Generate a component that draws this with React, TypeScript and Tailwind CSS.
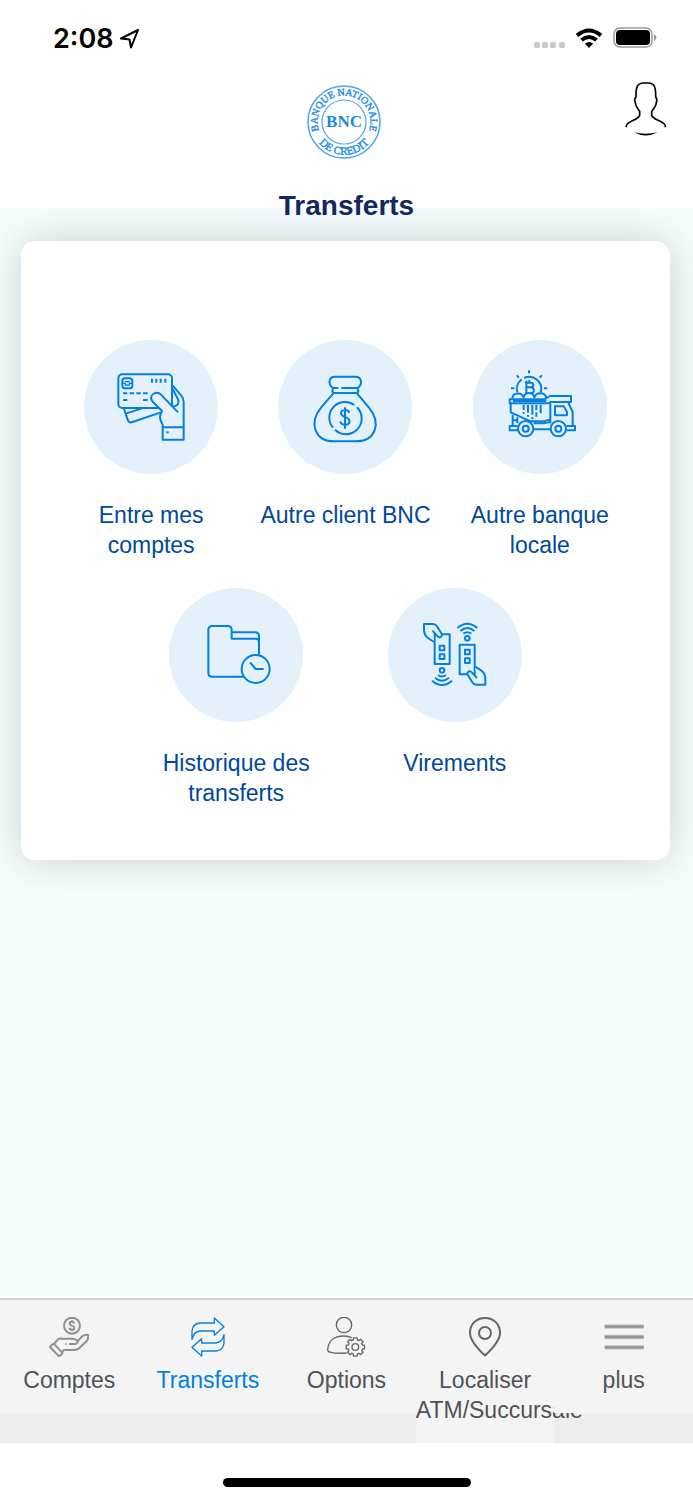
import type { ReactNode } from "react";

type Action = { label: string; icon: ReactNode };
type Tab = { label: string; icon: ReactNode; active?: boolean };

function ActionIcon({ viewBox, children }: { viewBox: string; children: ReactNode }) {
  return (
    <svg viewBox={viewBox} className="size-full" fill="none" stroke="#0080e0" strokeWidth="6" strokeLinejoin="round" aria-hidden="true">
      {children}
    </svg>
  );
}

function TabIcon({ viewBox, children }: { viewBox: string; children: ReactNode }) {
  return (
    <svg viewBox={viewBox} className="size-10" fill="none" stroke="#666" strokeWidth="4" strokeLinejoin="round" aria-hidden="true">
      {children}
    </svg>
  );
}

// Outline of a cog with eight square teeth
function gearPath(cx: number, cy: number, inner: number, outer: number) {
  const points: string[] = [];
  for (let i = 0; i < 8; i++) {
    const mid = (i * Math.PI) / 4;
    for (const [r, offset] of [[inner, -0.27], [outer, -0.2], [outer, 0.2], [inner, 0.27]]) {
      points.push(`${(cx + r * Math.cos(mid + offset)).toFixed(1)} ${(cy + r * Math.sin(mid + offset)).toFixed(1)}`);
    }
  }
  return `M${points.join("L")}Z`;
}

const TOP_ACTIONS: Action[] = [
  {
    label: "Entre mes comptes",
    icon: (
      <ActionIcon viewBox="-46 -45 402 402">
        <path d="M74 162L85 194Q89 205 100 201L184 172M79 176L128 160" />
        <path d="M220 92L246 122Q253 130 253 142V217M220 102L236 133Q240 146 232 151Q226 156 216 154" />
        <rect x="57" y="58" width="161" height="101" rx="12" />
        <rect x="69" y="70" width="30" height="30" rx="8" />
        <path d="M69 85H80M88 85H99M76 80H92M76 90H92" strokeWidth="4" />
        <path d="M158 71V83M171 71V83M184 71V83M198 71V83M71 115H84M91 115H104M111 115H124M131 115H145M71 135H84M131 135H145" />
        <path d="M190 217V209C178 190 181 180 188 168L160 140C152 131 155 121 162 117C170 112 179 113 185 119L236 172" fill="#e4f1fb" />
        <rect x="190" y="217" width="63" height="37" />
        <path d="M201 232H208" />
      </ActionIcon>
    ),
  },
  {
    label: "Autre client BNC",
    icon: (
      <ActionIcon viewBox="-63 -60 402 402">
        <path d="M103 84C88 76 86 50 108 50H169C191 50 190 76 175 84M103 84H118M127 84H175M103 84Q97 92 103 99H175Q181 92 175 84" />
        <path d="M103 100L66 143C28 190 48 244 105 244H170C230 244 248 190 210 143L174 100" />
        <path d="M166 135A47 47 0 0 0 102 203M108 209A47 47 0 0 0 174 142" />
        <path d="M151 158C148 148 126 147 126 160C126 173 152 170 152 184C152 198 126 197 124 184M138 142V206" />
      </ActionIcon>
    ),
  },
  {
    label: "Autre banque locale",
    icon: (
      <ActionIcon viewBox="-66 -60 402 402">
        <path d="M67 97A36 36 0 0 1 80 58M87 54A36 36 0 0 1 137 97M102 31V40M65 46L72 53M141 46L134 53M48 85H58M147 85H157" />
        <path d="M90 68H106C118 68 118 82 106 82H94M106 82C120 82 120 99 108 99M94 62V100M103 60V68" />
        <path d="M52 115C54 96 80 96 86 112C90 95 114 95 118 112C124 95 152 96 154 115" />
        <path d="M150 117L165 108H228V126H168L160 130H44V118H150ZM54 123H154" />
        <path d="M47 130V157L107 184H146L165 178M166 130V190M219 126L233 156V200M180 139H206L216 156V166H180Z" />
        <path d="M53 164V198M67 172V190M53 181H67M68 198H44V211H68M116 208H166M116 190H145L165 186M214 211H240V198H214" />
        <circle cx="92" cy="206" r="23" />
        <circle cx="92" cy="206" r="9" />
        <circle cx="190" cy="206" r="23" />
        <circle cx="190" cy="206" r="9" />
        <path d="M86 134V150M99 134V158M112 134V164M124 134V150M137 134V160M86 157V162M99 165V170M112 172V178M124 157V170" />
      </ActionIcon>
    ),
  },
];

const BOTTOM_ACTIONS: Action[] = [
  {
    label: "Historique des transferts",
    icon: (
      <ActionIcon viewBox="-60 -66 402 402">
        <path d="M165 200H70Q58 200 58 188V60Q58 48 70 48H116Q128 48 128 60V86H200Q210 86 210 96V134M128 67H198Q210 67 210 79V96" />
        <circle cx="200" cy="177" r="42" />
        <path d="M183 157L200 177H224" />
      </ActionIcon>
    ),
  },
  {
    label: "Virements",
    icon: (
      <ActionIcon viewBox="-51 -66 402 402">
        {[0, 180].map((angle) => (
          <g key={angle} transform={`rotate(${angle} 149 133)`}>
            <rect x="89" y="73" width="45" height="89" />
            <rect x="104" y="107" width="14" height="14" />
            <rect x="104" y="133" width="14" height="14" />
            <path d="M88 96L73 87Q57 77 57 60V42H84Q92 42 96 49L109 70C114 79 105 86 98 79L82 62" fill="#e4f1fb" />
            <circle cx="111" cy="181" r="7" />
            <path d="M99 195Q111 204 123 195M90 203Q111 221 132 203M81 212Q111 238 141 212" />
          </g>
        ))}
      </ActionIcon>
    ),
  },
];

const TABS: Tab[] = [
  {
    label: "Comptes",
    icon: (
      <TabIcon viewBox="149 81 120 120">
        <g stroke="#909090" strokeWidth="6">
          <circle cx="218" cy="107" r="24" />
          <path d="M225 100C222 93 211 94 211 101C211 108 225 106 225 113C225 121 212 121 210 113M218 91V97M218 118V123" />
          <path d="M164 162L175 149Q180 145 188 146H216Q231 147 235 153L250 138Q258 132 266 135Q268 143 263 152L240 174Q234 180 224 180H193L188 188" />
          <path d="M163 161L188 187Q190 191 186 194L179 199L152 171Q156 164 163 161ZM209 162H229Q236 159 235 153M198 162H202" />
        </g>
      </TabIcon>
    ),
  },
  {
    label: "Transferts",
    active: true,
    icon: (
      <TabIcon viewBox="562 82 120 120">
        {[0, 180].map((angle) => (
          <path key={angle} transform={`rotate(${angle} 622 142)`} d="M574 149V124Q576 102 598 100H641V85L670 111L641 137V124H598Q579 126 574 149Z" stroke="#0080e0" />
        ))}
      </TabIcon>
    ),
  },
  {
    label: "Options",
    icon: (
      <TabIcon viewBox="978 82 120 120">
        <circle cx="1032" cy="106" r="23" />
        <path d="M1040 190Q1010 192 993 188Q983 187 983 180C985 152 1005 139 1032 139Q1045 139 1055 144" />
        <path d={gearPath(1066, 172, 22, 28)} />
        <circle cx="1066" cy="172" r="10" />
      </TabIcon>
    ),
  },
  {
    label: "Localiser ATM/Succursale",
    icon: (
      <TabIcon viewBox="366 82 120 120">
        <g strokeWidth="6">
          <path d="M426 198C414 186 381 157 381 130C381 103 400 85 426 85S471 103 471 130C471 157 438 186 426 198Z" />
          <circle cx="426" cy="130" r="18" />
        </g>
      </TabIcon>
    ),
  },
  {
    label: "plus",
    icon: (
      <TabIcon viewBox="781 82 120 120">
        <path d="M783 111H900M783 142H900M783 173H900" stroke="#bdbdbd" strokeWidth="13" />
        <path d="M783 111H900M783 142H900M783 173H900" stroke="#929292" strokeWidth="7" />
      </TabIcon>
    ),
  },
];

function StatusBar() {
  return (
    <div className="flex h-[76px] items-center justify-between pr-9 pl-[53px]">
      <div className="flex items-center gap-1.5 pt-0.5">
        <span className="font-['Inter',sans-serif] text-[27px] leading-8 font-semibold text-black">2:08</span>
        <svg viewBox="0 0 20 20" className="size-5" fill="none" stroke="#000" strokeWidth="2" strokeLinejoin="round" aria-hidden="true">
          <path d="M18 1L1 9.500L9.500 10.500L11 18.500Z" />
        </svg>
      </div>
      <div className="flex items-center gap-2.5">
        <svg viewBox="0 0 32 22" className="h-[22px] w-8" fill="#c8c8c8" aria-hidden="true">
          <rect x="1" y="15" width="6" height="6" rx="2" />
          <rect x="9" y="15" width="6" height="6" rx="2" />
          <rect x="17" y="15" width="6" height="6" rx="2" />
          <rect x="26" y="15" width="6" height="6" rx="2" />
        </svg>
        <svg viewBox="0 0 28 20" className="h-5 w-7" fill="none" stroke="#000" strokeWidth="4" aria-hidden="true">
          <path d="M2 7.500Q14 -2.500 26 7.500M6.500 12Q14 6 21.500 12" />
          <path d="M14 20L9.800 15.500Q14 12.500 18.200 15.500Z" fill="#000" stroke="none" />
        </svg>
        <svg viewBox="0 0 44 22" className="h-[22px] w-11" aria-hidden="true">
          <rect x="1" y="1" width="38" height="19" rx="6" fill="none" stroke="#999" strokeWidth="1.500" />
          <rect x="3" y="3" width="34" height="15" rx="4" />
          <path d="M41 7Q46 10.500 41 14Z" fill="#999" />
        </svg>
      </div>
    </div>
  );
}

function Logo() {
  return (
    <svg viewBox="0 0 80 74" className="h-[74px] w-20" role="img" aria-label="Banque Nationale de Crédit">
      <defs>
        <path id="logo-top" d="M12.700 47.500A26.500 26.500 0 1 1 61.300 47.500" />
        <path id="logo-bottom" d="M9.700 55.200A32.800 32.800 0 0 0 64.300 55.200" />
      </defs>
      <g fill="none" stroke="#4aa5ea">
        <circle cx="37" cy="37" r="36" strokeWidth="1.500" />
        <circle cx="37" cy="37" r="22" strokeWidth="1.200" />
      </g>
      <g fill="#1c8ae2" textAnchor="middle" className="font-['Liberation_Serif',serif]">
        <text x="37" y="42" fontSize="17" fontWeight="700">BNC</text>
        <g stroke="#1c8ae2" strokeWidth="0.400">
          <text fontSize="10">
            <textPath href="#logo-top" startOffset="50%">BANQUE NATIONALE</textPath>
          </text>
          <text fontSize="11">
            <textPath href="#logo-bottom" startOffset="50%">DE CREDIT</textPath>
          </text>
        </g>
      </g>
    </svg>
  );
}

function Header() {
  return (
    <header className="relative z-10 bg-white">
      <StatusBar />
      <div className="grid grid-cols-[1fr_auto_1fr] items-start px-[26px] pt-1.5">
        <div />
        <div className="pt-[3px]">
          <Logo />
        </div>
        <button type="button" aria-label="Profil" className="justify-self-end">
          <svg viewBox="46 36 126 168" className="h-14 w-[42px]" fill="none" stroke="#000" strokeWidth="5" aria-hidden="true">
            <path d="M50 172V167C53 152 84 151 90 136V124C82 113 77 108 77 97Q72 89 79 80C78 50 84 39 101 39H116C133 39 139 50 138 80Q144 89 140 97C140 108 135 113 126 124V136C132 151 164 152 167 167V172" />
            <path d="M73 187Q108 195 144 187Q108 206 73 187Z" fill="#000" stroke="none" />
          </svg>
        </button>
      </div>
      <h1 className="-mb-3.5 pt-[31px] text-center text-[28px] leading-8 font-bold text-[#14285f]">Transferts</h1>
    </header>
  );
}

function ActionButton({ label, icon }: Action) {
  return (
    <button type="button" className="flex w-full flex-col items-center gap-[26px]">
      <span className="size-[134px] rounded-full bg-[#e4f1fb]">{icon}</span>
      <span className="text-[23px] leading-[30px] text-[#00489c]">{label}</span>
    </button>
  );
}

export default function App() {
  return (
    <div className="flex min-h-screen flex-col bg-white font-['Liberation_Sans',sans-serif]">
      <Header />

      <main className="flex-1 overflow-hidden bg-[#f7fcff] pt-[33px] pr-[23px] pb-10 pl-[21px]">
        <section className="rounded-[14px] bg-white px-[33px] pt-[99px] pb-[52px] shadow-[0_0_44px_rgba(20,30,30,0.2)]">
          <div className="grid grid-cols-3 items-start">
            {TOP_ACTIONS.map((action) => (
              <ActionButton key={action.label} {...action} />
            ))}
          </div>
          <div className="mx-auto mt-7 grid w-3/4 grid-cols-2 items-start">
            {BOTTOM_ACTIONS.map((action) => (
              <ActionButton key={action.label} {...action} />
            ))}
          </div>
        </section>
      </main>

      {/* Every tab is opaque, so a label that overflows runs under the next one */}
      <nav className="grid grid-cols-5 items-start border-t-2 border-[#d2d5d8] bg-[#ededed]">
        {TABS.map(({ label, icon, active }) => (
          <a
            key={label}
            href="#"
            aria-current={active ? "page" : undefined}
            className={`relative flex min-w-0 flex-col bg-[#f4f4f4] pt-[17px] pb-[18px] text-[23px] leading-[30px] ${active ? "text-[#0080e0]" : "text-[#4d5359]"}`}
          >
            <span className="mb-2 flex justify-center">{icon}</span>
            <span className="text-center">{label}</span>
          </a>
        ))}
      </nav>

      <footer className="flex h-[57px] justify-center pt-[35px]">
        <div className="h-[9px] w-[248px] rounded-full bg-black" />
      </footer>
    </div>
  );
}
